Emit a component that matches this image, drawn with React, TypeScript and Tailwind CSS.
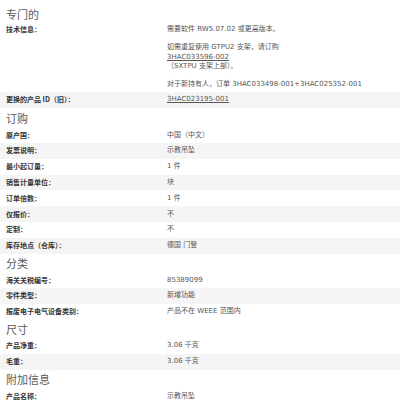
import React from "react";

type Row = { label: string; value: React.ReactNode };

const font = { fontFamily: '"Noto Sans CJK SC", "Noto Sans", sans-serif' };
const valueFont = { fontFamily: '"DejaVu Sans", "Noto Sans CJK SC", sans-serif' };

function Heading({ children, tall = false }: { children: React.ReactNode; tall?: boolean }) {
  return (
    <div
      className={`${tall ? "h-[19.5px]" : "h-[18.5px]"} flex items-center pt-[2px] text-[11px] text-[#5a5a5a] leading-none pl-[6px]`}
    >
      {children}
    </div>
  );
}

function Rows({ rows, startGray = false }: { rows: Row[]; startGray?: boolean }) {
  return (
    <div>
      {rows.map((r, i) => {
        const gray = startGray ? i % 2 === 0 : i % 2 === 1;
        return (
          <div
            key={r.label}
            className={`grid grid-cols-[161px_1fr] h-[15.8px] items-center px-[6px] text-[7px] leading-none ${
              gray ? "bg-[#f5f5f5]" : "bg-white"
            }`}
          >
            <div className="font-bold text-[#333]">{r.label}</div>
            <div className="text-[#555]" style={valueFont}>
              {r.value}
            </div>
          </div>
        );
      })}
    </div>
  );
}

const Link = ({ children }: { children: React.ReactNode }) => (
  <span className="underline text-[#555]">{children}</span>
);

export default function App() {
  return (
    <div className="w-[400px] h-[400px] overflow-hidden bg-white" style={font}>
      <div className="h-[22px] flex items-end pb-[2px] text-[11px] text-[#5a5a5a] leading-none pl-[6px]">
        专门的
      </div>
      <div className="grid grid-cols-[161px_1fr] px-[6px] pt-[3px] pb-[4px] text-[7px] leading-[9.5px] h-[70px]">
        <div className="font-bold text-[#333]">技术信息：</div>
        <div className="text-[#555]" style={valueFont}>
          <div>需要软件 RW5.07.02 或更高版本。</div>
          <div className="mt-[8.5px]">如需重复使用 GTPU2 支架，请订购</div>
          <div>
            <Link>3HAC033596-002</Link>
          </div>
          <div>（SXTPU 支架上部）。</div>
          <div className="mt-[8.5px]">对于新持有人，订单 3HAC033498-001+3HAC025352-001</div>
        </div>
      </div>
      <Rows
        startGray
        rows={[{ label: "更换的产品 ID（旧）：", value: <Link>3HAC023195-001</Link> }]}
      />
      <Heading tall>订购</Heading>
      <Rows
        rows={[
          { label: "原产国：", value: "中国（中文）" },
          { label: "发票说明：", value: "示教吊坠" },
          { label: "最小起订量：", value: "1 件" },
          { label: "销售计量单位：", value: "块" },
          { label: "订单倍数：", value: "1 件" },
          { label: "仅报价：", value: "不" },
          { label: "定制：", value: "不" },
          { label: "库存地点（仓库）：", value: "德国 门登" },
        ]}
      />
      <Heading>分类</Heading>
      <Rows
        rows={[
          { label: "海关关税编号：", value: "85389099" },
          { label: "零件类型：", value: "新增功能" },
          { label: "报废电子电气设备类别：", value: "产品不在 WEEE 范围内" },
        ]}
      />
      <Heading>尺寸</Heading>
      <Rows
        rows={[
          { label: "产品净重：", value: "3.06 千克" },
          { label: "毛重：", value: "3.06 千克" },
        ]}
      />
      <Heading>附加信息</Heading>
      <Rows rows={[{ label: "产品名称：", value: "示教吊坠" }]} />
    </div>
  );
}
